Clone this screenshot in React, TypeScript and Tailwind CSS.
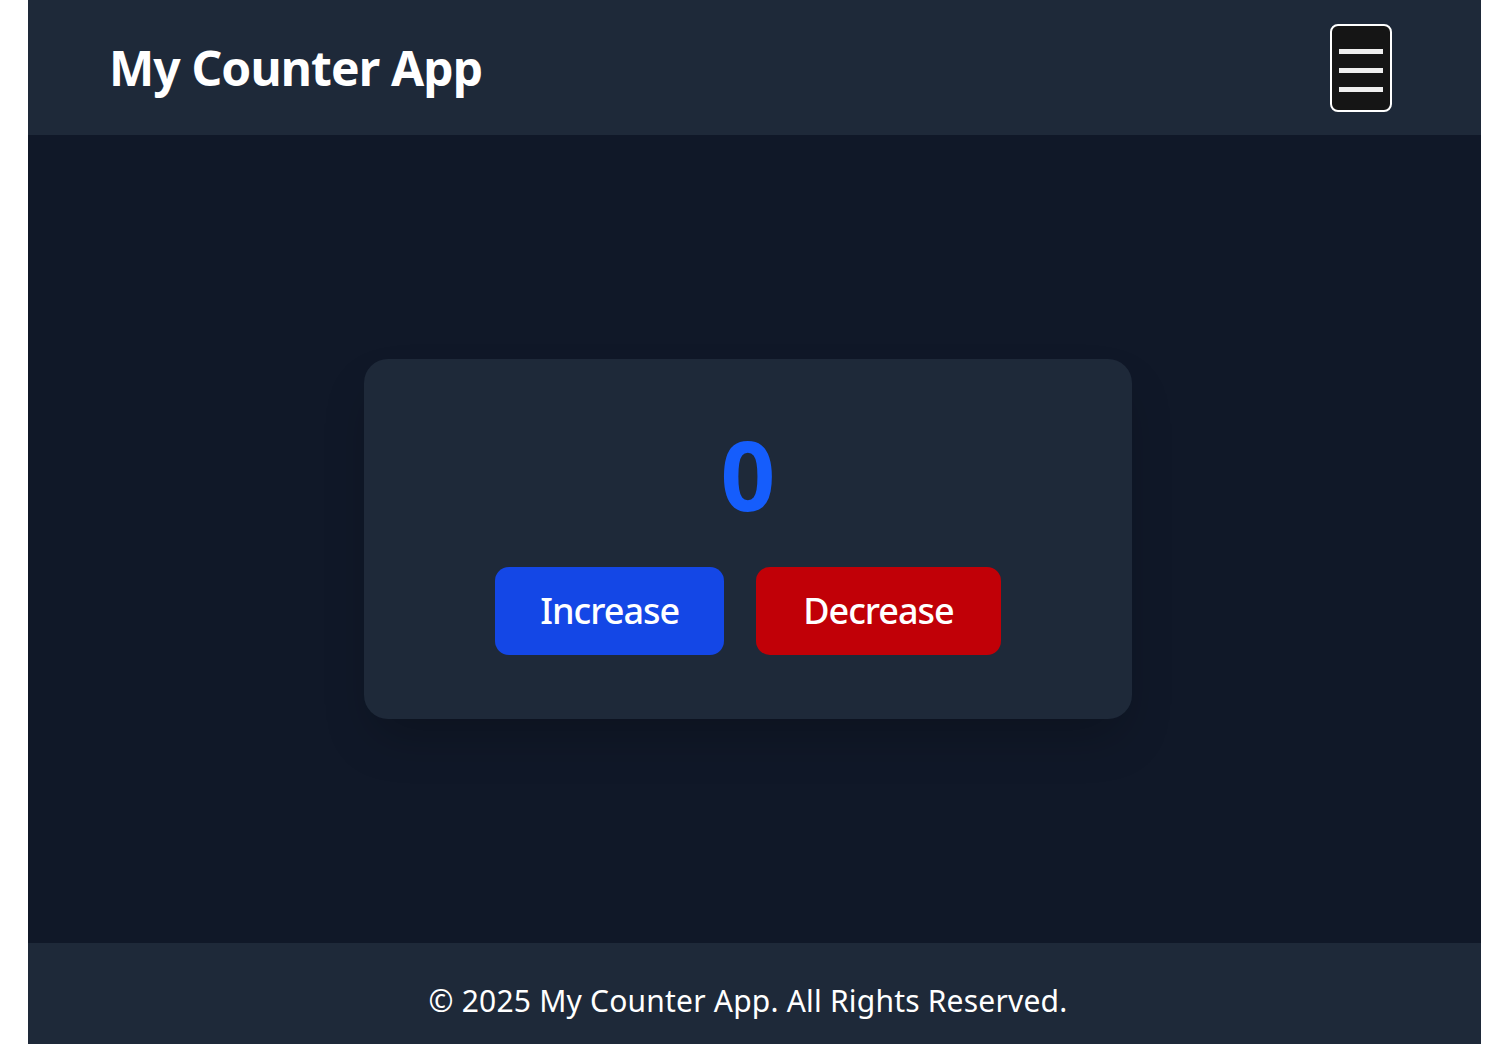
import React, { useState } from 'react';

const font = { fontFamily: '"Noto Sans", "Open Sans", sans-serif' };

const Header = () => (
  <header className="h-[135px] bg-[#1e2939] flex items-center justify-between pl-[81px] pr-[89px]">
    <h1 className="text-5xl font-bold text-white leading-none tracking-[-0.9px]">My Counter App</h1>
    <button className="w-[62px] h-[88px] rounded-lg border-2 border-white bg-[#151515] flex flex-col items-center justify-center gap-[14px] pt-[6px]">
      <span className="block w-[44px] h-[5px] bg-[#eeeeee]" />
      <span className="block w-[44px] h-[5px] bg-[#eeeeee]" />
      <span className="block w-[44px] h-[5px] bg-[#eeeeee]" />
    </button>
  </header>
);

export default function App() {
  const [count, setCount] = useState(0);

  return (
    <div className="bg-white min-h-screen" style={font}>
      <div className="ml-[28px] w-[1453px]">
        <Header />

        <main className="h-[808px] bg-[#101828] flex items-center justify-center pr-[13px]">
          <div className="w-[768px] h-[360px] rounded-3xl bg-[#1e2939] shadow-2xl flex flex-col items-center justify-center pt-[2px]">
            <div className="text-8xl font-bold text-[#155dfc] leading-none">{count}</div>
            <div className="flex gap-8 mt-[45px]">
              <button
                onClick={() => setCount(count + 1)}
                className="h-[88px] px-[45px] rounded-[14px] bg-[#1447e6] text-white text-4xl font-medium tracking-[-1px]"
              >
                Increase
              </button>
              <button
                onClick={() => setCount(count - 1)}
                className="h-[88px] px-[47px] rounded-[14px] bg-[#c10007] text-white text-4xl font-medium tracking-[-1px]"
              >
                Decrease
              </button>
            </div>
          </div>
        </main>

        <footer className="bg-[#1e2939] pt-[40px] pb-[40px] pr-[13px] text-center">
          <p className="text-3xl text-white leading-9 tracking-[0.2px]">© 2025 My Counter App. All Rights Reserved.</p>
        </footer>
      </div>
    </div>
  );
}
